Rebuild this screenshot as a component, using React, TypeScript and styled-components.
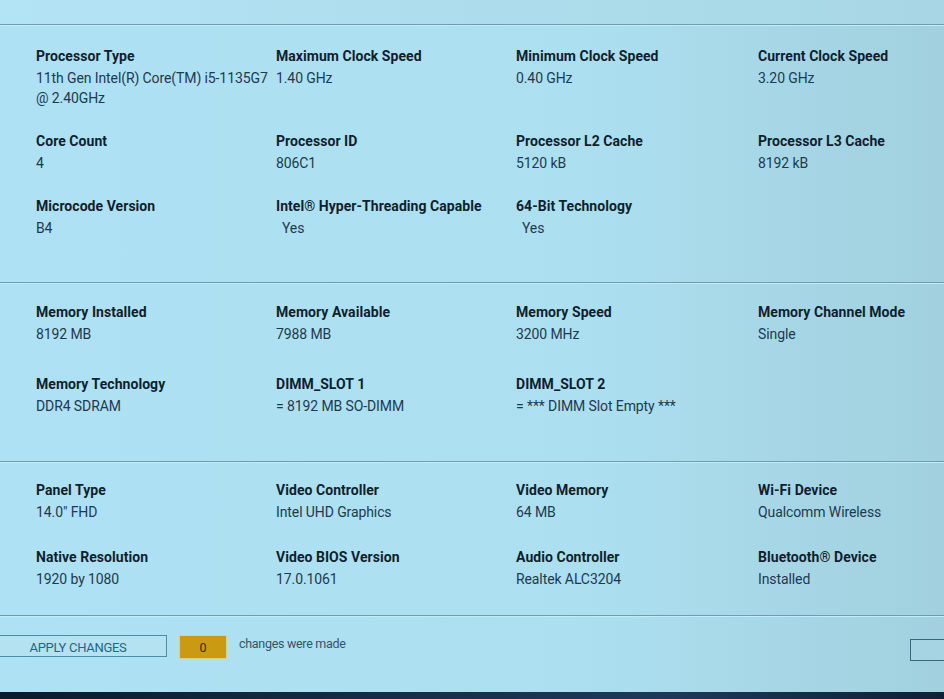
import styled, { createGlobalStyle } from 'styled-components'

const GlobalStyle = createGlobalStyle`
  html, body {
    margin: 0;
    padding: 0;
    background: #a9dbec;
  }
  body {
    font-family: Roboto, "Liberation Sans", sans-serif;
  }
`

const StyledScreen = styled.div`
  width: 944px;
  height: 699px;
  display: flex;
  flex-direction: column;
  overflow: hidden;
  background: linear-gradient(to right, #aee1f3 0%, #ace0f1 60%, #a2d0de 100%);
`
const StyledTopBar = styled.div`
  height: 24px;
  background: linear-gradient(to right, #b3e4f5, #a8d6e4);
`
const StyledDivider = styled.div`
  height: 1px;
  background: #6e9db0;
  border-bottom: 1px solid #c4ecf8;
`
type SectionProps = {
  $padTop: number
  $padBottom: number
  $rowGap: number
}
const StyledSection = styled.section<SectionProps>`
  display: grid;
  grid-template-columns: 240px 240px 242px 1fr;
  row-gap: ${(p) => p.$rowGap}px;
  padding: ${(p) => p.$padTop}px 0 ${(p) => p.$padBottom}px 36px;
`
const StyledField = styled.div`
  display: flex;
  flex-direction: column;
`
const StyledLabel = styled.div`
  font-size: 14px;
  font-weight: 700;
  line-height: 20px;
  color: #0f1f2d;
  letter-spacing: 0.05px;
  white-space: nowrap;
`
const StyledValue = styled.div<{ $indent?: boolean }>`
  margin-top: 2px;
  padding-left: ${(p) => (p.$indent ? 6 : 0)}px;
  font-size: 14px;
  line-height: 20px;
  color: #1d3a4e;
  letter-spacing: -0.1px;
  white-space: nowrap;
`

const StyledFooter = styled.div`
  flex: 1;
  display: flex;
  align-items: flex-start;
  padding-top: 18px;
`
const StyledApplyButton = styled.button`
  width: 168px;
  height: 22px;
  margin-left: -1px;
  border: 1px solid #4a8ea8;
  background: #b4e2f1;
  color: #1c6887;
  font-family: Roboto, "Liberation Sans", sans-serif;
  font-size: 13px;
  letter-spacing: -0.3px;
  padding: 2px 10px 0 0;
`
const StyledCount = styled.div`
  width: 46px;
  height: 22px;
  margin-left: 12px;
  background: #c99a12;
  border: 1px solid #e0cf84;
  display: flex;
  align-items: center;
  justify-content: center;
  font-size: 12.5px;
  color: #3a2a08;
`
const StyledCountText = styled.span`
  margin-left: 12px;
  margin-top: 1px;
  font-size: 12.5px;
  letter-spacing: -0.3px;
  color: #355463;
`
const StyledSpacer = styled.div`
  flex: 1;
`
const StyledSideButton = styled.div`
  width: 40px;
  height: 20px;
  margin-top: 4px;
  margin-right: -8px;
  border: 1px solid #2f6c80;
  background: #a6d4e2;
`
const StyledBottomStrip = styled.div`
  height: 7px;
  background: linear-gradient(to right, #0c1a2b, #1e3a5a 70%, #0f2036);
`

type FieldData = {
  label: string
  values: string[]
  indent?: boolean
}

const FIELD_SECTIONS: { pad: [number, number, number]; fields: (FieldData | null)[] }[] = [
  {
    pad: [20, 44, 23],
    fields: [
      { label: 'Processor Type', values: ['11th Gen Intel(R) Core(TM) i5-1135G7', '@ 2.40GHz'] },
      { label: 'Maximum Clock Speed', values: ['1.40 GHz'] },
      { label: 'Minimum Clock Speed', values: ['0.40 GHz'] },
      { label: 'Current Clock Speed', values: ['3.20 GHz'] },
      { label: 'Core Count', values: ['4'] },
      { label: 'Processor ID', values: ['806C1'] },
      { label: 'Processor L2 Cache', values: ['5120 kB'] },
      { label: 'Processor L3 Cache', values: ['8192 kB'] },
      { label: 'Microcode Version', values: ['B4'] },
      { label: 'Intel® Hyper-Threading Capable', values: ['Yes'], indent: true },
      { label: '64-Bit Technology', values: ['Yes'], indent: true },
      null,
    ],
  },
  {
    pad: [18, 45, 30],
    fields: [
      { label: 'Memory Installed', values: ['8192 MB'] },
      { label: 'Memory Available', values: ['7988 MB'] },
      { label: 'Memory Speed', values: ['3200 MHz'] },
      { label: 'Memory Channel Mode', values: ['Single'] },
      { label: 'Memory Technology', values: ['DDR4 SDRAM'] },
      { label: 'DIMM_SLOT 1', values: ['= 8192 MB SO-DIMM'] },
      { label: 'DIMM_SLOT 2', values: ['= *** DIMM Slot Empty ***'] },
      null,
    ],
  },
  {
    pad: [17, 26, 25],
    fields: [
      { label: 'Panel Type', values: ['14.0" FHD'] },
      { label: 'Video Controller', values: ['Intel UHD Graphics'] },
      { label: 'Video Memory', values: ['64 MB'] },
      { label: 'Wi-Fi Device', values: ['Qualcomm Wireless'] },
      { label: 'Native Resolution', values: ['1920 by 1080'] },
      { label: 'Video BIOS Version', values: ['17.0.1061'] },
      { label: 'Audio Controller', values: ['Realtek ALC3204'] },
      { label: 'Bluetooth® Device', values: ['Installed'] },
    ],
  },
]

const Field: React.FC<{ field: FieldData | null }> = ({ field }) => {
  if (!field) return <StyledField />
  return (
    <StyledField>
      <StyledLabel>{field.label}</StyledLabel>
      {field.values.map((v, i) => (
        <StyledValue key={i} $indent={field.indent} style={i > 0 ? { marginTop: 0 } : undefined}>
          {v}
        </StyledValue>
      ))}
    </StyledField>
  )
}

export default function App() {
  return (
    <>
      <GlobalStyle />
      <StyledScreen>
        <StyledTopBar />
        {FIELD_SECTIONS.map((section, i) => (
          <div key={i}>
            <StyledDivider />
            <StyledSection
              $padTop={section.pad[0]}
              $padBottom={section.pad[1]}
              $rowGap={section.pad[2]}
            >
              {section.fields.map((f, j) => (
                <Field key={j} field={f} />
              ))}
            </StyledSection>
          </div>
        ))}
        <StyledDivider />
        <StyledFooter>
          <StyledApplyButton>APPLY CHANGES</StyledApplyButton>
          <StyledCount>0</StyledCount>
          <StyledCountText>changes were made</StyledCountText>
          <StyledSpacer />
          <StyledSideButton />
        </StyledFooter>
        <StyledBottomStrip />
      </StyledScreen>
    </>
  )
}
